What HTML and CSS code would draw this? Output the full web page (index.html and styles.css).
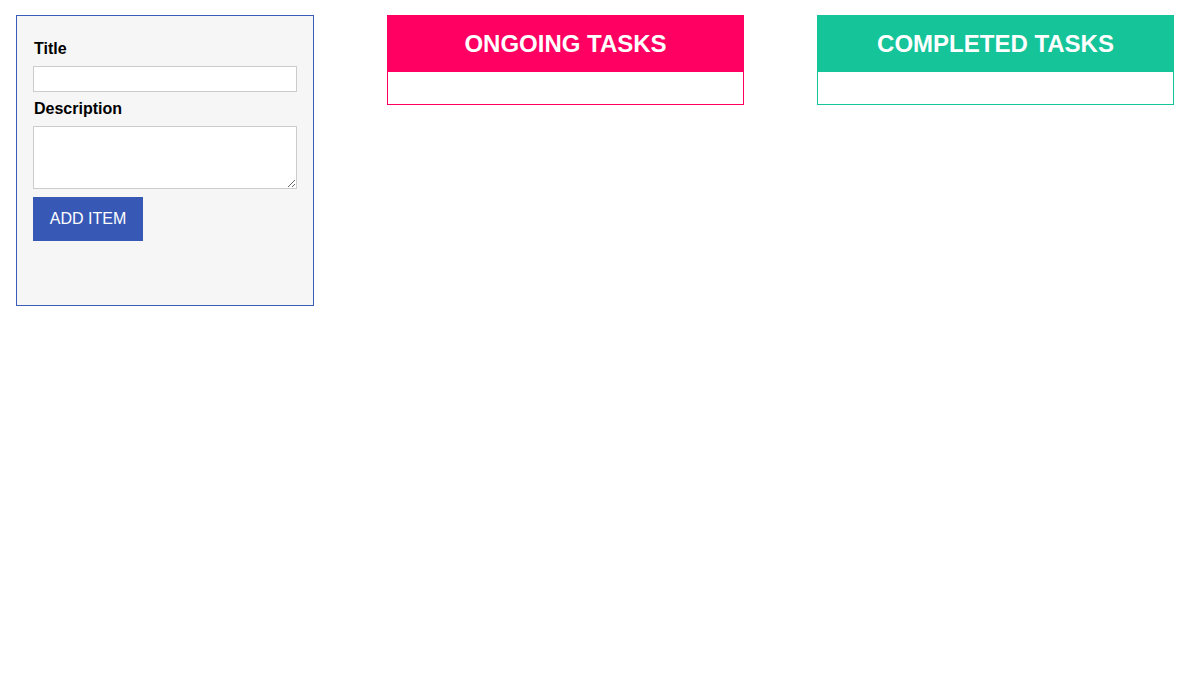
FILE: index.html
```html
<!DOCTYPE html>
<html>
<head>
<meta charset="utf-8">
<link rel="stylesheet" href="styles.css">
</head>
<body>
<div class="board">
  <form class="add-form">
    <label class="field-label" for="title">Title</label>
    <input class="field-input" id="title" type="text">
    <label class="field-label" for="desc">Description</label>
    <textarea class="field-textarea" id="desc"></textarea>
    <button class="add-btn" type="button">ADD ITEM</button>
  </form>
  <section class="list list-ongoing">
    <h2 class="list-head">ONGOING TASKS</h2>
    <div class="list-body"></div>
  </section>
  <section class="list list-completed">
    <h2 class="list-head">COMPLETED TASKS</h2>
    <div class="list-body"></div>
  </section>
</div>
</body>
</html>
```

FILE: styles.css
```css
html, body {
  margin: 0;
  padding: 0;
  background: #ffffff;
}
body {
  font-family: "Liberation Sans", Arial, sans-serif;
  color: #000;
}
.board {
  display: flex;
  align-items: flex-start;
  gap: 73px;
  padding: 15px 15px 0 16px;
}
.add-form {
  box-sizing: border-box;
  width: 298px;
  height: 291px;
  border: 1px solid #3a5bb8;
  background: #f6f6f6;
  padding: 24px 16px 0 16px;
  display: flex;
  flex-direction: column;
  align-items: flex-start;
}
.field-label {
  display: block;
  font-size: 16px;
  font-weight: bold;
  line-height: 18px;
  margin-left: 1px;
}
.field-input {
  box-sizing: border-box;
  width: 264px;
  height: 26px;
  margin: 8px 0 8px 0;
  border: 1px solid #cccccc;
  background: #fff;
  padding: 2px 4px;
}
.field-textarea {
  box-sizing: border-box;
  width: 264px;
  height: 63px;
  margin: 8px 0 8px 0;
  border: 1px solid #cccccc;
  background: #fff;
  resize: vertical;
}
.add-btn {
  width: 110px;
  height: 44px;
  border: none;
  background: #3759b5;
  color: #ffffff;
  font-family: "Liberation Sans", Arial, sans-serif;
  font-size: 16px;
  padding: 0;
}
.list {
  box-sizing: border-box;
  width: 357px;
  border: 1px solid;
  background: #fff;
}
.list-ongoing { border-color: #ff0062; }
.list-completed { border-color: #16c49a; }
.list-head {
  margin: 0;
  height: 56px;
  display: flex;
  align-items: center;
  justify-content: center;
  color: #ffffff;
  font-size: 24px;
  font-weight: bold;
}
.list-ongoing .list-head { background: #ff0062; }
.list-completed .list-head { background: #16c49a; }
.list-body {
  height: 32px;
}
```
